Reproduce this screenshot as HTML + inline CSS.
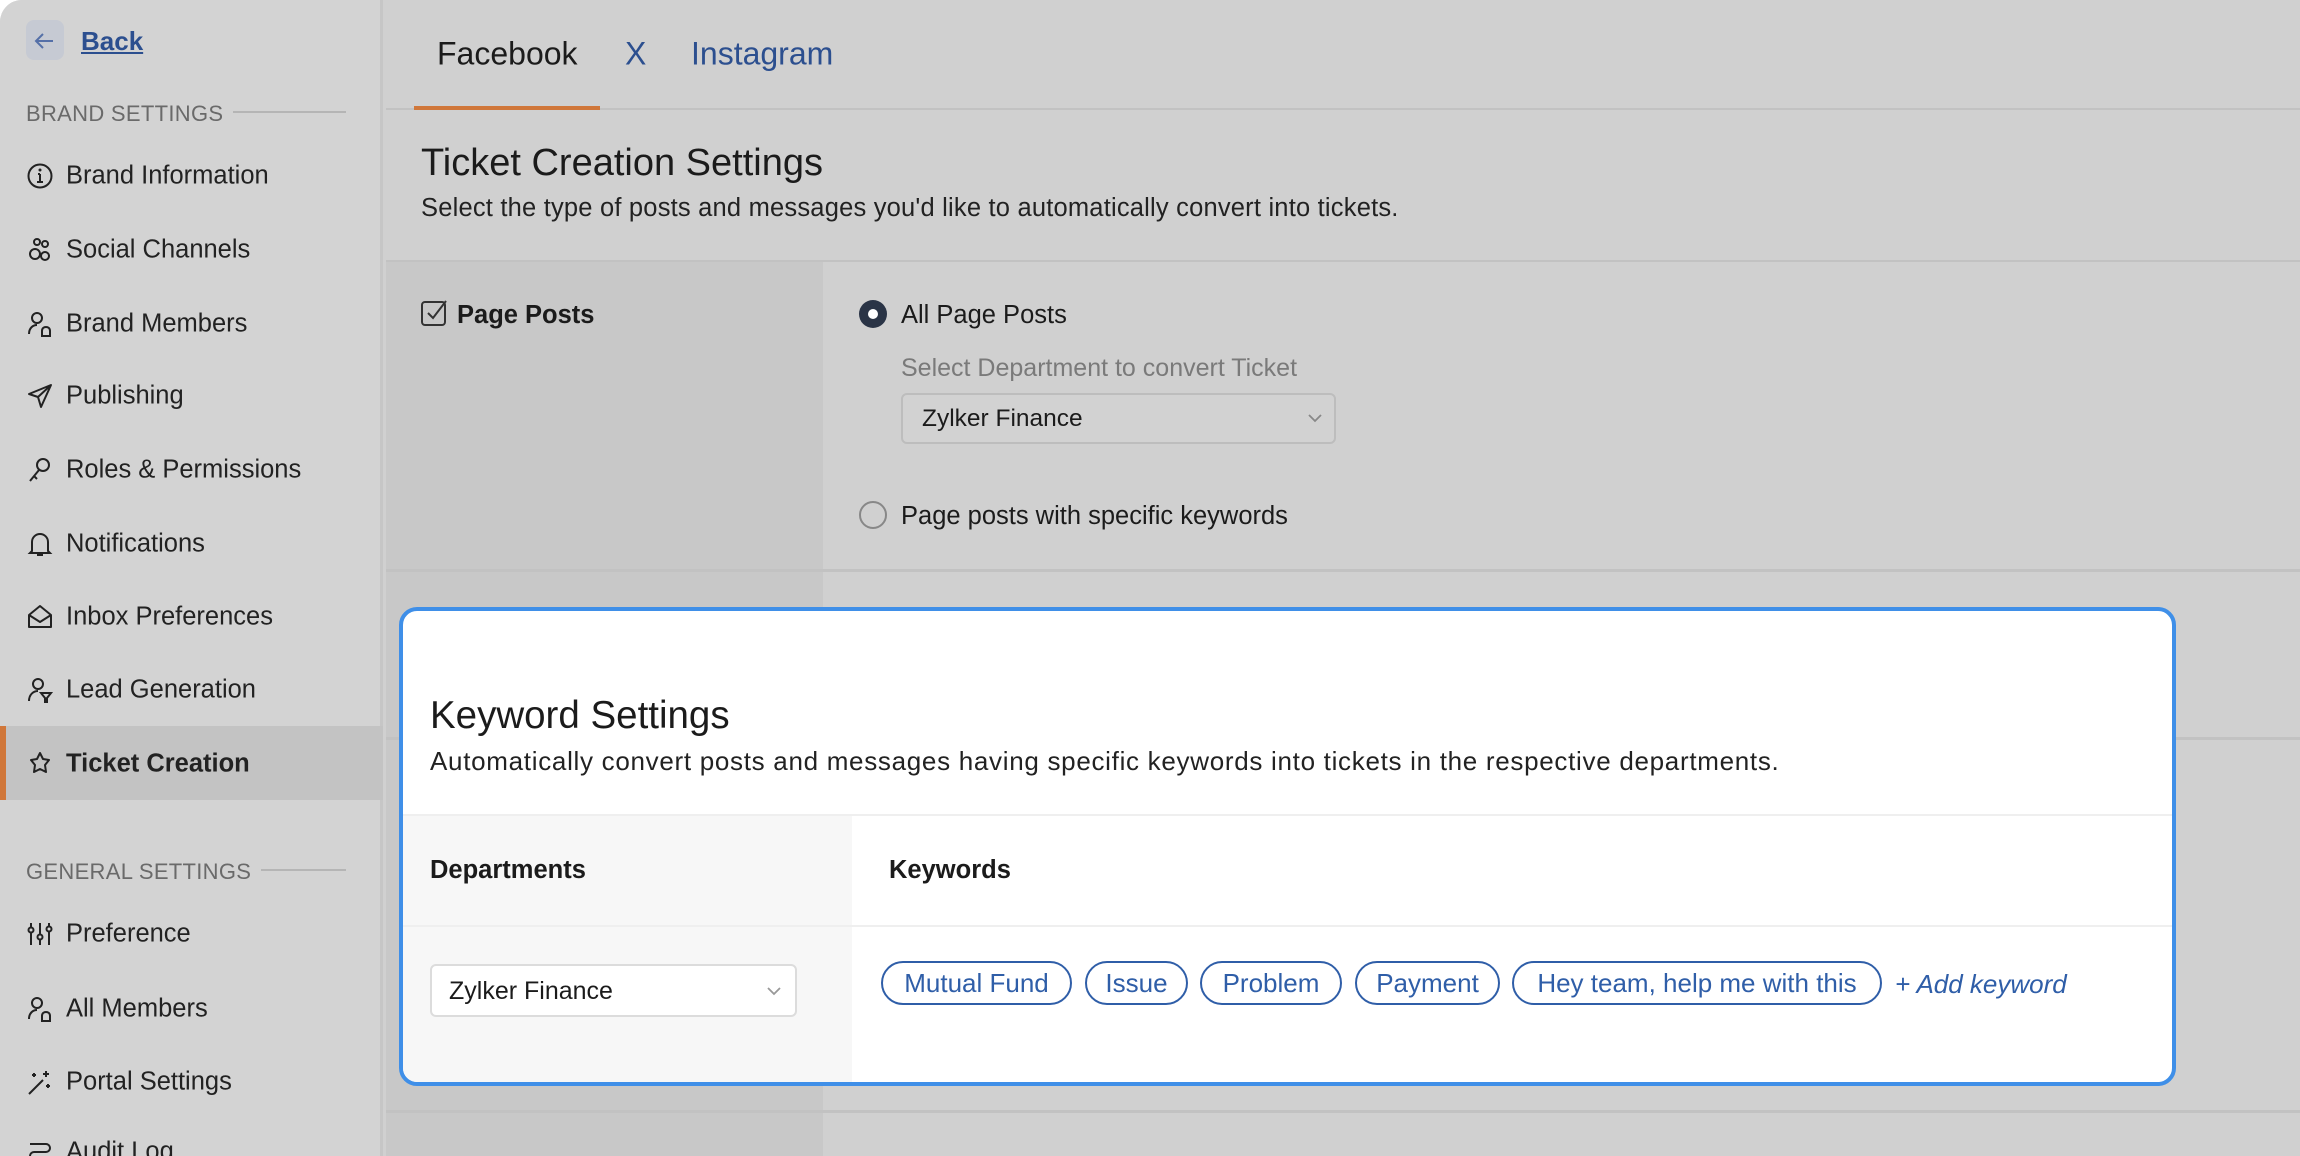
<!DOCTYPE html>
<html><head><meta charset="utf-8"><style>
*{box-sizing:border-box;margin:0;padding:0}
body{width:2300px;height:1156px;overflow:hidden;background:#fff;font-family:"Liberation Sans",sans-serif;color:#1b1b1b;position:relative}
.app{position:absolute;left:0;top:0;width:2300px;height:1156px;background:#d0d0d0;border-radius:22px 0 0 0;overflow:hidden}
.side{position:absolute;left:0;top:0;width:383px;height:1156px;background:#d3d3d3;border-right:3px solid #c6c6c6}
.abs{position:absolute;white-space:nowrap}
.back{left:26px;top:20px;width:38px;height:40px;background:#c6cad3;border-radius:8px}
.sec{font-size:22px;color:#6a6a6a;letter-spacing:.3px}
.secl{height:2px;background:#b5b5b5}
.item{left:66px;font-size:25.5px;color:#222;transform:translateY(-50%)}
.ic{position:absolute;left:26px;width:28px;height:28px;transform:translateY(-50%)}
.main{position:absolute;left:386px;top:0;right:0;height:1156px}
.tab{font-size:32px;transform:translateY(-50%)}
.blue{color:#2c4f8f}
.chip{position:absolute;top:961px;height:44px;border:2px solid #2f5ea8;border-radius:22px;color:#2f5ea8;font-size:26px;line-height:40px;text-align:center}
</style></head><body>
<div class="app">
<div class="side">
  <div class="abs back"></div>
  <svg class="abs" style="left:33px;top:30px" width="24" height="22" viewBox="0 0 24 22"><path d="M20 11H4M10 4L3 11l7 7" stroke="#5570a8" stroke-width="2" fill="none"/></svg>
  <div class="abs" style="left:81px;top:26px;font-size:26px;color:#2c4f8f;text-decoration:underline;font-weight:bold">Back</div>
  <div class="abs sec" style="left:26px;top:101px">BRAND SETTINGS</div>
  <div class="abs secl" style="left:233px;top:111px;width:113px"></div>

  <svg class="ic" style="top:176px" viewBox="0 0 28 28"><circle cx="14" cy="14" r="11.5" stroke="#222" stroke-width="2" fill="none"/><path d="M14 12v8M11 20h6M12 12h2" stroke="#222" stroke-width="2"/><circle cx="14" cy="8" r="1.5" fill="#222"/></svg>
  <div class="abs item" style="top:176px">Brand Information</div>
  <svg class="ic" style="top:250px" viewBox="0 0 28 28"><circle cx="9" cy="18" r="5" stroke="#222" stroke-width="2" fill="none"/><circle cx="19" cy="20" r="4" stroke="#222" stroke-width="2" fill="none"/><circle cx="11" cy="6" r="3" stroke="#222" stroke-width="2" fill="none"/><circle cx="19" cy="8" r="3" stroke="#222" stroke-width="2" fill="none"/></svg>
  <div class="abs item" style="top:250px">Social Channels</div>
  <svg class="ic" style="top:324px" viewBox="0 0 28 28"><circle cx="11" cy="8" r="5" stroke="#222" stroke-width="2" fill="none"/><path d="M3 24c0-6 4-9 8-9M16 26v-5c0-3 2-4 4-4s4 1 4 4v5z" stroke="#222" stroke-width="2" fill="none"/></svg>
  <div class="abs item" style="top:324px">Brand Members</div>
  <svg class="ic" style="top:396px" viewBox="0 0 28 28"><path d="M25 3L3 12l9 3 3 10z M12 15L25 3" stroke="#222" stroke-width="2" fill="none" stroke-linejoin="round"/></svg>
  <div class="abs item" style="top:396px">Publishing</div>
  <svg class="ic" style="top:470px" viewBox="0 0 28 28"><circle cx="17" cy="9" r="6" stroke="#222" stroke-width="2" fill="none"/><path d="M13 14L4 25M8 20l3 3" stroke="#222" stroke-width="2" fill="none"/></svg>
  <div class="abs item" style="top:470px">Roles &amp; Permissions</div>
  <svg class="ic" style="top:544px" viewBox="0 0 28 28"><path d="M6 21V12a8 8 0 0116 0v9l2 2H4z M11 25h6" stroke="#222" stroke-width="2" fill="none"/></svg>
  <div class="abs item" style="top:544px">Notifications</div>
  <svg class="ic" style="top:617px" viewBox="0 0 28 28"><path d="M3 12L14 3l11 9v12H3z M3 12l11 7 11-7" stroke="#222" stroke-width="2" fill="none" stroke-linejoin="round"/></svg>
  <div class="abs item" style="top:617px">Inbox Preferences</div>
  <svg class="ic" style="top:690px" viewBox="0 0 28 28"><circle cx="12" cy="8" r="5" stroke="#222" stroke-width="2" fill="none"/><path d="M3 25c0-6 4-10 9-10M15 17h10l-4 5v4h-2v-4z" stroke="#222" stroke-width="2" fill="none"/></svg>
  <div class="abs item" style="top:690px">Lead Generation</div>

  <div class="abs" style="left:0;top:726px;width:383px;height:74px;background:#c3c3c3"></div>
  <div class="abs" style="left:0;top:726px;width:6px;height:74px;background:#d0773a"></div>
  <svg class="ic" style="top:764px" viewBox="0 0 28 28"><path d="M14 3l3 6 6 1-4 5 1 7-6-3-6 3 1-7-4-5 6-1z" stroke="#222" stroke-width="2" fill="none" stroke-linejoin="round"/></svg>
  <div class="abs item" style="top:764px;font-weight:bold">Ticket Creation</div>

  <div class="abs sec" style="left:26px;top:859px">GENERAL SETTINGS</div>
  <div class="abs secl" style="left:261px;top:869px;width:85px"></div>
  <svg class="ic" style="top:934px" viewBox="0 0 28 28"><path d="M5 3v22M14 3v22M23 3v22" stroke="#222" stroke-width="2"/><circle cx="5" cy="10" r="2.5" fill="#d3d3d3" stroke="#222" stroke-width="2"/><circle cx="14" cy="17" r="2.5" fill="#d3d3d3" stroke="#222" stroke-width="2"/><circle cx="23" cy="9" r="2.5" fill="#d3d3d3" stroke="#222" stroke-width="2"/></svg>
  <div class="abs item" style="top:934px">Preference</div>
  <svg class="ic" style="top:1009px" viewBox="0 0 28 28"><circle cx="11" cy="8" r="5" stroke="#222" stroke-width="2" fill="none"/><path d="M3 24c0-6 4-9 8-9M16 26v-5c0-3 2-4 4-4s4 1 4 4v5z" stroke="#222" stroke-width="2" fill="none"/></svg>
  <div class="abs item" style="top:1009px">All Members</div>
  <svg class="ic" style="top:1082px" viewBox="0 0 28 28"><path d="M3 26L17 12M20 3v6M17 6h6M8 5v4M6 7h4M22 16v4M20 18h4" stroke="#222" stroke-width="2"/></svg>
  <div class="abs item" style="top:1082px">Portal Settings</div>
  <svg class="ic" style="top:1152px" viewBox="0 0 28 28"><path d="M4 6h16a4 4 0 010 8H8a4 4 0 000 8h16" stroke="#222" stroke-width="2" fill="none"/></svg>
  <div class="abs item" style="top:1152px">Audit Log</div>
</div>

<div class="main">
  <div class="abs" style="left:0;top:108px;width:1914px;height:2px;background:#c2c2c2"></div>
  <div class="abs tab" style="left:51px;top:54px">Facebook</div>
  <div class="abs tab blue" style="left:239px;top:54px">X</div>
  <div class="abs tab blue" style="left:305px;top:54px">Instagram</div>
  <div class="abs" style="left:28px;top:106px;width:186px;height:4px;background:#d0773a"></div>

  <div class="abs" style="left:35px;top:142px;font-size:38px">Ticket Creation Settings</div>
  <div class="abs" style="left:35px;top:194px;font-size:25.5px;color:#222;letter-spacing:.2px">Select the type of posts and messages you'd like to automatically convert into tickets.</div>

  <div class="abs" style="left:0;top:260px;width:1914px;height:2px;background:#c2c2c2"></div>
  <div class="abs" style="left:0;top:262px;width:437px;height:894px;background:#c8c8c8"></div>
  <div class="abs" style="left:0;top:569px;width:1914px;height:3px;background:#c2c2c2"></div>
  <div class="abs" style="left:0;top:737px;width:1914px;height:3px;background:#c2c2c2"></div>
  <div class="abs" style="left:0;top:1110px;width:1914px;height:3px;background:#c2c2c2"></div>

  <svg class="abs" style="left:34px;top:298px" width="30" height="30" viewBox="0 0 30 30"><rect x="2" y="4" width="23" height="23" rx="3" stroke="#333" stroke-width="2" fill="none"/><path d="M8 15l5 5 13-17" stroke="#333" stroke-width="2" fill="none"/></svg>
  <div class="abs" style="left:71px;top:301px;font-size:25.5px;font-weight:bold">Page Posts</div>

  <div class="abs" style="left:473px;top:300px;width:28px;height:28px;border-radius:50%;background:#2a3446"></div>
  <div class="abs" style="left:482px;top:309px;width:10px;height:10px;border-radius:50%;background:#fff"></div>
  <div class="abs" style="left:515px;top:301px;font-size:25.5px">All Page Posts</div>
  <div class="abs" style="left:515px;top:354px;font-size:25px;color:#7a7a7a">Select Department to convert Ticket</div>
  <div class="abs" style="left:515px;top:393px;width:435px;height:51px;border:2px solid #bdbdbd;border-radius:6px;background:#d2d2d2"></div>
  <div class="abs" style="left:536px;top:405px;font-size:24.5px">Zylker Finance</div>
  <svg class="abs" style="left:921px;top:412px" width="16" height="12" viewBox="0 0 16 12"><path d="M2 3l6 6 6-6" stroke="#888" stroke-width="1.8" fill="none"/></svg>
  <div class="abs" style="left:473px;top:501px;width:28px;height:28px;border-radius:50%;border:2px solid #888"></div>
  <div class="abs" style="left:515px;top:502px;font-size:25.5px">Page posts with specific keywords</div>
</div>

<div class="abs" style="left:399px;top:607px;width:1777px;height:479px;background:#fff;border:4px solid #3f8fe8;border-radius:18px;overflow:hidden">
  <div class="abs" style="left:27px;top:83px;font-size:38.5px">Keyword Settings</div>
  <div class="abs" style="left:27px;top:135px;font-size:26px;color:#222;letter-spacing:.7px">Automatically convert posts and messages having specific keywords into tickets in the respective departments.</div>
  <div class="abs" style="left:0;top:203px;width:1777px;height:2px;background:#efefef"></div>
  <div class="abs" style="left:0;top:205px;width:449px;height:280px;background:#f7f7f7"></div>
  <div class="abs" style="left:0;top:314px;width:1777px;height:2px;background:#efefef"></div>
  <div class="abs" style="left:27px;top:245px;font-size:25.5px;font-weight:bold">Departments</div>
  <div class="abs" style="left:486px;top:245px;font-size:25.5px;font-weight:bold">Keywords</div>
  <div class="abs" style="left:27px;top:353px;width:367px;height:53px;border:2px solid #dcdcdc;border-radius:6px;background:#fff"></div>
  <div class="abs" style="left:46px;top:366px;font-size:25px">Zylker Finance</div>
  <svg class="abs" style="left:363px;top:374px" width="16" height="12" viewBox="0 0 16 12"><path d="M2 3l6 6 6-6" stroke="#999" stroke-width="1.8" fill="none"/></svg>
</div>
<div class="chip" style="left:881px;width:191px">Mutual Fund</div>
<div class="chip" style="left:1085px;width:103px">Issue</div>
<div class="chip" style="left:1200px;width:142px">Problem</div>
<div class="chip" style="left:1355px;width:145px">Payment</div>
<div class="chip" style="left:1512px;width:370px">Hey team, help me with this</div>
<div class="abs" style="left:1895px;top:969px;font-size:26px;color:#2f5ea8;font-style:italic">+ Add keyword</div>
</div>
</body></html>
